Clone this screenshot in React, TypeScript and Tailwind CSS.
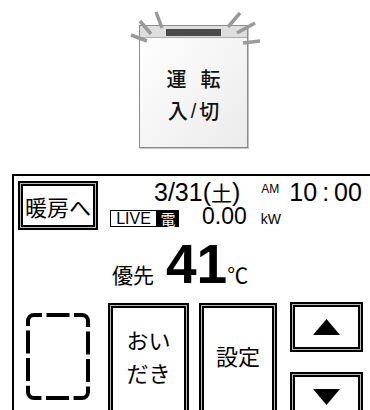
import type React from "react"

function FrameButton({ className, children }: { className: string; children?: React.ReactNode }) {
  return (
    <div className={`shrink-0 border-2 border-black bg-[#b8b8b8] p-px ${className}`}>
      <div className="h-full w-full border-2 border-black bg-white">{children}</div>
    </div>
  )
}

function Rays() {
  const rays = [
    [156, 12, 162, 28],
    [140, 21, 151, 34],
    [131, 35, 147, 41],
    [240, 13, 228, 27],
    [255, 23, 237, 33],
    [260, 41, 243, 43],
  ]
  return (
    <svg className="pointer-events-none absolute left-0 top-0" width="370" height="60">
      {rays.map(([x1, y1, x2, y2], i) => (
        <line key={i} x1={x1} y1={y1} x2={x2} y2={y2} stroke="#9a9a9a" strokeWidth="3.5" />
      ))}
    </svg>
  )
}

export default function App() {
  return (
    <div className="relative h-[410px] w-[370px] overflow-hidden bg-white font-['Liberation_Sans','Noto_Sans_CJK_JP',sans-serif] text-black">
      {/* power button */}
      <div className="h-[148px] pl-[139px] pt-[25px]">
        <div className="flex h-[123px] w-[109px] flex-col border border-[#8c8c8c] bg-linear-to-br from-white to-[#ebebeb] shadow-[1px_1px_0_#c4c4c4]">
          <div className="flex h-[12px] justify-center border-b border-[#ababab] bg-[#dedede] pt-[3px]">
            <div className="h-[7px] w-[55px] bg-[#4a4a4a]" />
          </div>
          <div className="flex flex-col items-center pt-[25px] font-['Noto_Sans_CJK_JP',sans-serif] text-[20px] font-medium leading-[32px] text-[#111]">
            <div className="flex gap-[14px]">
              <span>運</span>
              <span>転</span>
            </div>
            <div className="flex items-center gap-[3px]">
              <span>入</span>
              <span className="font-['Liberation_Sans',sans-serif]">/</span>
              <span>切</span>
            </div>
          </div>
        </div>
      </div>
      <Rays />

      {/* remote panel */}
      <div className="ml-[12px] mt-[26px] h-[250px] w-[380px] border-2 border-black">
        <div className="flex h-[60px] items-start">
          <FrameButton className="ml-[4px] mt-[5px] h-[49px] w-[80px]">
            <div className="flex h-full items-center justify-center font-['Noto_Sans_CJK_JP',sans-serif] text-[22px] leading-none">
              暖房へ
            </div>
          </FrameButton>

          <div className="ml-[12px] mt-[4px] flex shrink-0 flex-col">
            <div className="flex h-[25px] items-baseline pl-[44px] text-[25px] leading-[25px]">
              <span>3/31(</span>
              <span className="font-['Noto_Sans_CJK_JP',sans-serif] text-[21px] leading-[21px]">土</span>
              <span>)</span>
              <span className="ml-[21px] mt-[3px] self-start text-[12px] leading-[12px]">AM</span>
              <span className="ml-[10px]">10</span>
              <span className="mx-[5px]">:</span>
              <span>00</span>
            </div>
            <div className="flex h-[22px] items-start">
              <div className="mt-[5px] flex h-[17px] shrink-0">
                <div className="flex h-[17px] w-[47px] shrink-0 items-center justify-center border-[1.5px] border-black text-[16px] leading-none">
                  LIVE
                </div>
                <div className="flex h-[17px] w-[22px] shrink-0 items-center justify-center bg-black font-['Noto_Sans_CJK_JP',sans-serif] text-[15px] leading-none text-white">
                  電
                </div>
              </div>
              <span className="ml-[23px] shrink-0 text-[23px] leading-[22px]">0.00</span>
              <span className="ml-[14px] mt-[7px] shrink-0 text-[14px] leading-[14px]">kW</span>
            </div>
          </div>
        </div>

        <div className="flex h-[66px] items-baseline pl-[98px]">
          <span className="font-['Noto_Sans_CJK_JP',sans-serif] text-[21px]">優先</span>
          <span className="ml-[12px] text-[55px] font-bold leading-[56px]">41</span>
          <span className="font-['Noto_Sans_CJK_JP',sans-serif] text-[21px]">℃</span>
        </div>

        <div className="flex items-start">
          <svg className="ml-[12px] mt-[11px] shrink-0" width="64" height="87" viewBox="0 0 64 87">
            <rect
              x="2"
              y="2"
              width="60"
              height="83"
              rx="6"
              fill="none"
              stroke="#000"
              strokeWidth="4"
              strokeDasharray="23 4.57"
              strokeDashoffset="-12.5"
            />
          </svg>

          <FrameButton className="ml-[18px] mt-px h-[120px] w-[81px]">
            <div className="flex flex-col items-center pt-[15px] font-['Noto_Sans_CJK_JP',sans-serif] text-[22px] leading-[33px]">
              <span>おい</span>
              <span>だき</span>
            </div>
          </FrameButton>

          <FrameButton className="ml-[10px] mt-px h-[120px] w-[78px]">
            <div className="flex justify-center pt-[31px] font-['Noto_Sans_CJK_JP',sans-serif] text-[22px] leading-[33px]">
              設定
            </div>
          </FrameButton>

          <div className="ml-[13px] flex w-[73px] shrink-0 flex-col gap-[20px]">
            <FrameButton className="h-[50px] w-[73px]">
              <div className="flex h-full items-center justify-center">
                <svg width="27" height="16" viewBox="0 0 27 16">
                  <polygon points="13.5,0 27,16 0,16" fill="#000" />
                </svg>
              </div>
            </FrameButton>
            <FrameButton className="h-[50px] w-[73px]">
              <div className="flex h-full items-center justify-center">
                <svg width="27" height="16" viewBox="0 0 27 16">
                  <polygon points="0,0 27,0 13.5,16" fill="#000" />
                </svg>
              </div>
            </FrameButton>
          </div>
        </div>
      </div>
    </div>
  )
}
